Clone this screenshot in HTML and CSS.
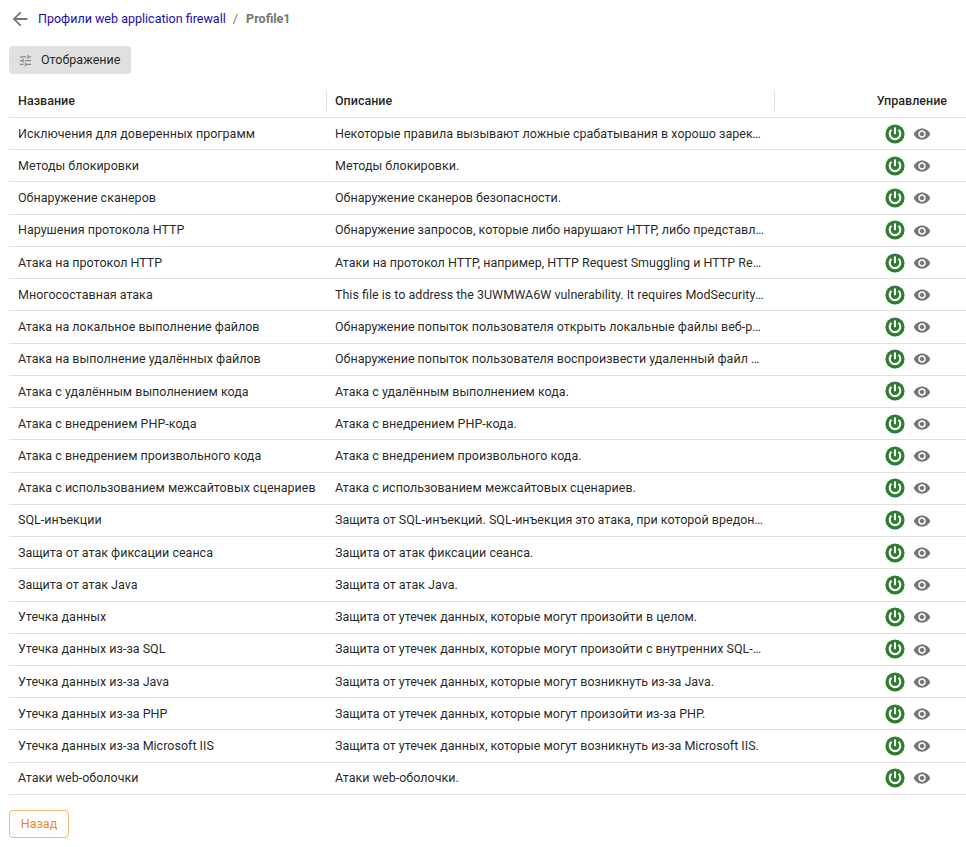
FILE: index.html
```html
<!DOCTYPE html>
<html lang="ru">
<head>
<meta charset="utf-8">
<title>Profile1</title>
<link rel="stylesheet" href="styles.css">
</head>
<body>
<svg class="defs" width="0" height="0" aria-hidden="true">
  <symbol id="power" viewBox="0 0 20 20">
    <circle cx="10" cy="10" r="9.6" fill="#2e7d32"/>
    <path d="M10 3.4v6.8" stroke="#fff" stroke-width="2.1" fill="none"/>
    <path d="M6.5 5.8a5.3 5.3 0 1 0 7 0" stroke="#fff" stroke-width="2.1" fill="none"/>
  </symbol>
  <symbol id="eye" viewBox="0 0 24 24">
    <path fill="#757575" d="M12 4.5C7 4.5 2.73 7.61 1 12c1.73 4.39 6 7.5 11 7.5s9.27-3.11 11-7.5c-1.73-4.39-6-7.5-11-7.5zM12 17c-2.76 0-5-2.24-5-5s2.24-5 5-5 5 2.24 5 5-2.24 5-5 5zm0-8c-1.66 0-3 1.34-3 3s1.34 3 3 3 3-1.34 3-3-1.34-3-3-3z"/>
  </symbol>
</svg>
<nav class="crumbs">
  <svg class="back" viewBox="0 0 24 24"><path d="M20 11H7.83l5.59-5.59L12 4l-8 8 8 8 1.41-1.41L7.83 13H20v-2z"/></svg>
  <a class="crumb-link" href="#">Профили web application firewall</a>
  <span class="crumb-sep">/</span>
  <span class="crumb-current">Profile1</span>
</nav>
<div class="toolbar">
  <button class="view-btn" type="button">
    <svg class="tune" viewBox="0 0 24 24"><path d="M3 17v2h6v-2H3zM3 5v2h10V5H3zm10 16v-2h8v-2h-8v-2h-2v6h2zM7 9v2H3v2h4v2h2V9H7zm14 4v-2H11v2h10zm-6-4h2V7h4V5h-4V3h-2v6z"/></svg>
    <span class="view-label">Отображение</span>
  </button>
</div>
<table class="grid">
  <colgroup><col class="c1"><col class="c2"><col class="c3"></colgroup>
  <thead>
    <tr>
      <th><span class="th-in">Название</span></th>
      <th><span class="th-in">Описание</span></th>
      <th class="th-ctl"><span class="th-in">Управление</span></th>
    </tr>
  </thead>
  <tbody>
    <tr><td>Исключения для доверенных программ</td><td><div class="desc">Некоторые правила вызывают ложные срабатывания в хорошо зарекомендовавших себя программах.</div></td><td><div class="ctl"><svg class="ic-power"><use href="#power"/></svg><svg class="ic-eye"><use href="#eye"/></svg></div></td></tr>
    <tr><td>Методы блокировки</td><td><div class="desc">Методы блокировки.</div></td><td><div class="ctl"><svg class="ic-power"><use href="#power"/></svg><svg class="ic-eye"><use href="#eye"/></svg></div></td></tr>
    <tr><td>Обнаружение сканеров</td><td><div class="desc">Обнаружение сканеров безопасности.</div></td><td><div class="ctl"><svg class="ic-power"><use href="#power"/></svg><svg class="ic-eye"><use href="#eye"/></svg></div></td></tr>
    <tr><td>Нарушения протокола HTTP</td><td><div class="desc">Обнаружение запросов, которые либо нарушают HTTP, либо представляют собой атаку.</div></td><td><div class="ctl"><svg class="ic-power"><use href="#power"/></svg><svg class="ic-eye"><use href="#eye"/></svg></div></td></tr>
    <tr><td>Атака на протокол HTTP</td><td><div class="desc">Атаки на протокол HTTP, например, HTTP Request Smuggling и HTTP Response Splitting.</div></td><td><div class="ctl"><svg class="ic-power"><use href="#power"/></svg><svg class="ic-eye"><use href="#eye"/></svg></div></td></tr>
    <tr><td>Многосоставная атака</td><td><div class="desc">This file is to address the 3UWMWA6W vulnerability. It requires ModSecurity to inspect the request.</div></td><td><div class="ctl"><svg class="ic-power"><use href="#power"/></svg><svg class="ic-eye"><use href="#eye"/></svg></div></td></tr>
    <tr><td>Атака на локальное выполнение файлов</td><td><div class="desc">Обнаружение попыток пользователя открыть локальные файлы веб-ресурса на сервере.</div></td><td><div class="ctl"><svg class="ic-power"><use href="#power"/></svg><svg class="ic-eye"><use href="#eye"/></svg></div></td></tr>
    <tr><td>Атака на выполнение удалённых файлов</td><td><div class="desc">Обнаружение попыток пользователя воспроизвести удаленный файл на сервере приложения.</div></td><td><div class="ctl"><svg class="ic-power"><use href="#power"/></svg><svg class="ic-eye"><use href="#eye"/></svg></div></td></tr>
    <tr><td>Атака с удалённым выполнением кода</td><td><div class="desc">Атака с удалённым выполнением кода.</div></td><td><div class="ctl"><svg class="ic-power"><use href="#power"/></svg><svg class="ic-eye"><use href="#eye"/></svg></div></td></tr>
    <tr><td>Атака с внедрением PHP-кода</td><td><div class="desc">Атака с внедрением PHP-кода.</div></td><td><div class="ctl"><svg class="ic-power"><use href="#power"/></svg><svg class="ic-eye"><use href="#eye"/></svg></div></td></tr>
    <tr><td>Атака с внедрением произвольного кода</td><td><div class="desc">Атака с внедрением произвольного кода.</div></td><td><div class="ctl"><svg class="ic-power"><use href="#power"/></svg><svg class="ic-eye"><use href="#eye"/></svg></div></td></tr>
    <tr><td>Атака с использованием межсайтовых сценариев</td><td><div class="desc">Атака с использованием межсайтовых сценариев.</div></td><td><div class="ctl"><svg class="ic-power"><use href="#power"/></svg><svg class="ic-eye"><use href="#eye"/></svg></div></td></tr>
    <tr><td>SQL-инъекции</td><td><div class="desc">Защита от SQL-инъекций. SQL-инъекция это атака, при которой вредоносный код внедряется в запрос.</div></td><td><div class="ctl"><svg class="ic-power"><use href="#power"/></svg><svg class="ic-eye"><use href="#eye"/></svg></div></td></tr>
    <tr><td>Защита от атак фиксации сеанса</td><td><div class="desc">Защита от атак фиксации сеанса.</div></td><td><div class="ctl"><svg class="ic-power"><use href="#power"/></svg><svg class="ic-eye"><use href="#eye"/></svg></div></td></tr>
    <tr><td>Защита от атак Java</td><td><div class="desc">Защита от атак Java.</div></td><td><div class="ctl"><svg class="ic-power"><use href="#power"/></svg><svg class="ic-eye"><use href="#eye"/></svg></div></td></tr>
    <tr><td>Утечка данных</td><td><div class="desc">Защита от утечек данных, которые могут произойти в целом.</div></td><td><div class="ctl"><svg class="ic-power"><use href="#power"/></svg><svg class="ic-eye"><use href="#eye"/></svg></div></td></tr>
    <tr><td>Утечка данных из-за SQL</td><td><div class="desc">Защита от утечек данных, которые могут произойти с внутренних SQL-серверов приложения.</div></td><td><div class="ctl"><svg class="ic-power"><use href="#power"/></svg><svg class="ic-eye"><use href="#eye"/></svg></div></td></tr>
    <tr><td>Утечка данных из-за Java</td><td><div class="desc">Защита от утечек данных, которые могут возникнуть из-за Java.</div></td><td><div class="ctl"><svg class="ic-power"><use href="#power"/></svg><svg class="ic-eye"><use href="#eye"/></svg></div></td></tr>
    <tr><td>Утечка данных из-за PHP</td><td><div class="desc">Защита от утечек данных, которые могут произойти из-за PHP.</div></td><td><div class="ctl"><svg class="ic-power"><use href="#power"/></svg><svg class="ic-eye"><use href="#eye"/></svg></div></td></tr>
    <tr><td>Утечка данных из-за Microsoft IIS</td><td><div class="desc">Защита от утечек данных, которые могут возникнуть из-за Microsoft IIS.</div></td><td><div class="ctl"><svg class="ic-power"><use href="#power"/></svg><svg class="ic-eye"><use href="#eye"/></svg></div></td></tr>
    <tr><td>Атаки web-оболочки</td><td><div class="desc">Атаки web-оболочки.</div></td><td><div class="ctl"><svg class="ic-power"><use href="#power"/></svg><svg class="ic-eye"><use href="#eye"/></svg></div></td></tr>
  </tbody>
</table>
<div class="footer">
  <button class="back-btn" type="button">Назад</button>
</div>
</body>
</html>
```
FILE: styles.css
```css
* { box-sizing: border-box; }
html, body { margin: 0; padding: 0; }
body {
  font-family: Roboto, "Liberation Sans", sans-serif;
  font-size: 12.53px;
  color: rgba(0, 0, 0, 0.87);
  background: #fff;
  padding: 0 0 0 9px;
  width: 966px;
  overflow: hidden;
}
.defs { position: absolute; }
.crumbs {
  display: flex;
  align-items: center;
  height: 37px;
  font-size: 12.53px;
}
.back { width: 22px; height: 22px; fill: #757575; margin-right: 7px; }
.crumb-link { color: #1a0dab; text-decoration: none; }
.crumb-sep { color: #757575; margin: 0 8px 0 7px; font-size: 13px; }
.crumb-current { color: #757575; font-weight: 700; }
.toolbar { padding-top: 9px; height: 48px; }
.view-btn {
  display: flex;
  align-items: center;
  height: 28px;
  width: 122px;
  padding: 0 0 0 9px;
  border: 0;
  border-radius: 4px;
  background: #e0e0e0;
  font: inherit;
  color: rgba(0, 0, 0, 0.87);
}
.view-label { padding-bottom: 1px; }
.tune { width: 15px; height: 15px; fill: #8a8a8a; margin-right: 8px; }
.grid {
  width: 957px;
  border-collapse: separate;
  border-spacing: 0;
  table-layout: fixed;
}
.c1 { width: 318px; }
.c2 { width: 448px; }
.c3 { width: 191px; }
th {
  height: 33px;
  padding: 0;
  text-align: left;
  font-weight: 500;
  border-bottom: 1px solid #e0e0e0;
}
.th-in {
  display: block;
  height: 20px;
  line-height: 20px;
  padding-left: 8px;
  border-right: 1px solid #e0e0e0;
}
th:first-child .th-in { padding-left: 9px; }
.th-ctl .th-in { border-right: 0; padding: 0 19px 0 0; text-align: right; }
td {
  height: 32.24px;
  padding: 0 9px;
  border-bottom: 1px solid #e0e0e0;
  white-space: nowrap;
}
td:nth-child(-n+2) { padding-bottom: 0.9px; }
td:nth-child(2) { padding-left: 8px; }
.desc {
  max-width: 429px;
  overflow: hidden;
  text-overflow: ellipsis;
}
.ctl {
  display: flex;
  align-items: center;
  justify-content: flex-end;
  padding-right: 26px;
  gap: 8px;
}
.ic-power { width: 20px; height: 20px; }
.ic-eye { width: 18px; height: 18px; margin-top: 0.4px; }
.footer { padding-top: 15px; }
.back-btn {
  width: 60px;
  height: 28px;
  padding: 0;
  border: 1px solid #f5b97a;
  border-radius: 4px;
  background: #fff;
  color: #ef8a1f;
  font: inherit;
}
```
